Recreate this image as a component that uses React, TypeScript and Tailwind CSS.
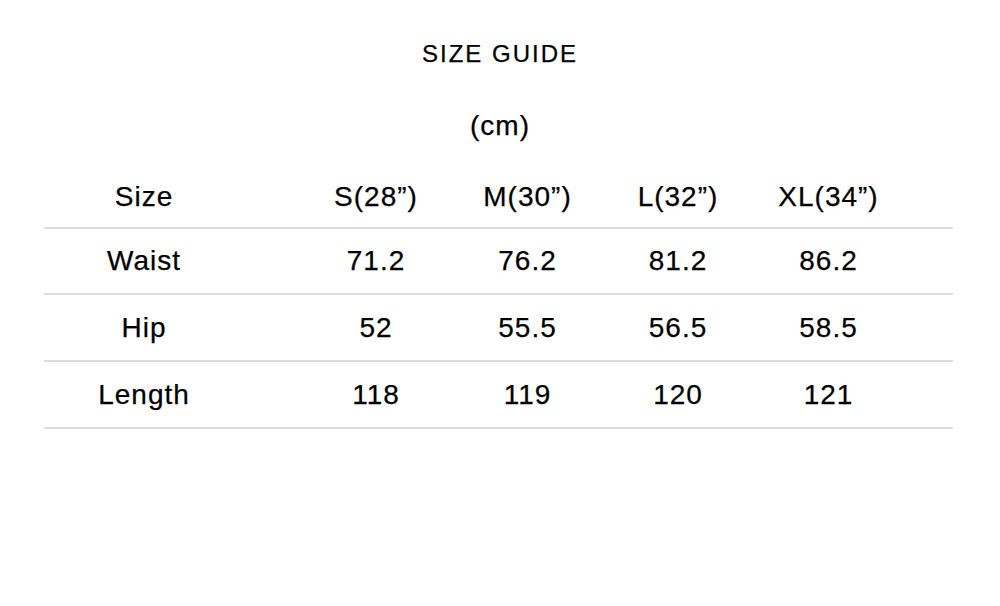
const headers = ['Size', 'S(28”)', 'M(30”)', 'L(32”)', 'XL(34”)'];

const rows = [
  ['Waist', '71.2', '76.2', '81.2', '86.2'],
  ['Hip', '52', '55.5', '56.5', '58.5'],
  ['Length', '118', '119', '120', '121'],
];

const cols = 'grid grid-cols-[200px_56px_152px_151px_150px_151px_1fr] items-center';

function Row({ cells, height }: { cells: string[]; height: string }) {
  return (
    <div className={`${cols} ${height} border-b-2 border-[#dcdcdc]`}>
      <div className="text-center">{cells[0]}</div>
      <div />
      {cells.slice(1).map((c, i) => (
        <div key={i} className="text-center">
          {c}
        </div>
      ))}
      <div />
    </div>
  );
}

const rowHeights = ['h-[66px]', 'h-[67px]', 'h-[67px]'];

export default function App() {
  return (
    <div
      className="h-[606px] w-[1000px] bg-white text-black [-webkit-text-stroke:0.25px_black]"
      style={{ fontFamily: '"Liberation Sans", Arial, sans-serif' }}
    >
      <div className="pt-[38px] text-center text-[24px] leading-[32px] tracking-[2px]">
        SIZE GUIDE
      </div>
      <div className="mt-[38px] text-center text-[28px] leading-[36px] tracking-[1px]">(cm)</div>
      <div className="mx-[44px] mt-[23px] w-[909px] text-[28px] tracking-[1px]">
        <Row cells={headers} height="h-[62px]" />
        {rows.map((r, i) => (
          <Row key={r[0]} cells={r} height={rowHeights[i]} />
        ))}
      </div>
    </div>
  );
}
